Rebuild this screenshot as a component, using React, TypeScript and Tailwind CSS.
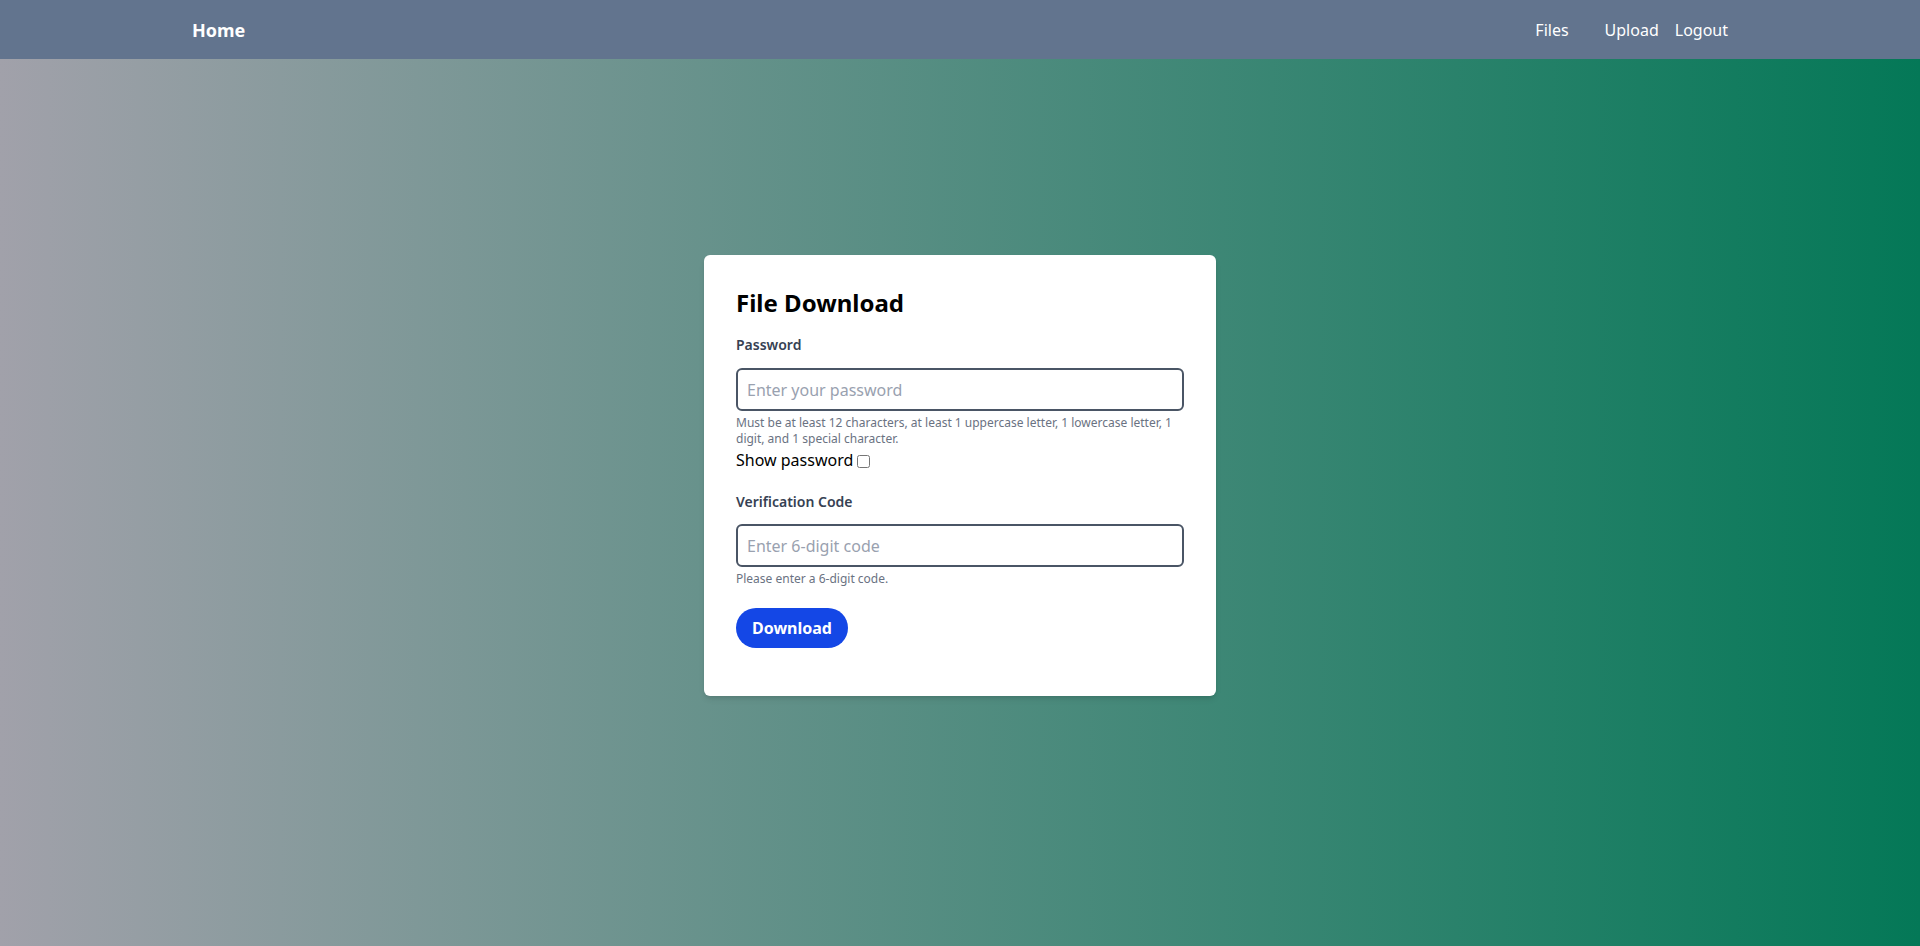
import React from "react";

export default function App() {
  return (
    <div
      className="flex h-screen w-full flex-col"
      style={{ fontFamily: '"Noto Sans", "Open Sans", sans-serif' }}
    >
      <nav className="flex h-[59px] shrink-0 items-center justify-between bg-slate-500 pl-[192px] pr-[192px] text-white">
        <a className="text-lg font-bold" href="#">Home</a>
        <div className="flex items-center text-base">
          <a href="#" className="mr-[36px]">Files</a>
          <a href="#" className="mr-[16px]">Upload</a>
          <a href="#">Logout</a>
        </div>
      </nav>
      <main className="flex flex-1 items-center justify-center bg-linear-to-r/srgb from-[#a1a1aa] to-[#047857] pb-[54px]">
        <div className="w-[512px] rounded-md bg-white p-8 shadow-md">
          <h1 className="mb-4 text-2xl font-bold text-black">File Download</h1>
          <label className="mb-[13px] block text-sm font-semibold text-gray-700">Password</label>
          <input
            type="password"
            placeholder="Enter your password"
            className="block h-[43px] w-full rounded-md border-2 border-gray-600 px-[9px] text-base text-gray-800 placeholder:text-gray-400 focus:outline-none"
          />
          <p className="mt-1 text-xs text-gray-500">
            Must be at least 12 characters, at least 1 uppercase letter, 1 lowercase letter, 1 digit, and 1 special character.
          </p>
          <div className="pt-px text-base leading-6 text-black">
            <span>Show password</span>
            <input type="checkbox" className="ml-[4px] mr-[3px] h-[13px] w-[13px] align-[-2px]" />
          </div>
          <label className="mt-5 mb-3 block text-sm font-semibold text-gray-700">Verification Code</label>
          <input
            type="text"
            placeholder="Enter 6-digit code"
            className="block h-[43px] w-full rounded-md border-2 border-gray-600 px-[9px] text-base text-gray-800 placeholder:text-gray-400 focus:outline-none"
          />
          <p className="mt-1 text-xs text-gray-500">Please enter a 6-digit code.</p>
          <button className="mt-[21px] mb-4 h-10 w-28 rounded-full bg-blue-700 font-bold text-white">
            Download
          </button>
        </div>
      </main>
    </div>
  );
}
